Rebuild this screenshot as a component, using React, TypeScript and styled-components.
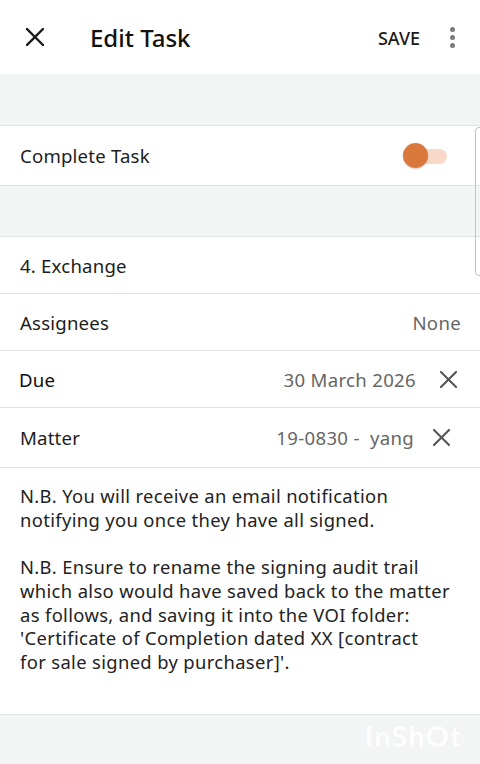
import React from 'react';
import styled, { createGlobalStyle } from 'styled-components';

const GlobalStyle = createGlobalStyle`
  html, body {
    margin: 0;
    padding: 0;
    background: #f3f4f4;
  }
  body {
    font-family: "Noto Sans", "Open Sans", sans-serif;
    color: #1c1c1c;
  }
  * {
    box-sizing: border-box;
  }
`;

const CloseIcon = ({ size = 18, color = '#1c1c1c', width = 2.4 }: { size?: number; color?: string; width?: number }) => (
  <svg width={size} height={size} viewBox="0 0 18 18">
    <path d="M1 1 L17 17 M17 1 L1 17" stroke={color} strokeWidth={width} strokeLinecap="square" fill="none" />
  </svg>
);

const notes = [
  ['N.B. You will receive an email notification', 'notifying you once they have all signed.'],
  [
    'N.B. Ensure to rename the signing audit trail',
    'which also would have saved back to the matter',
    'as follows, and saving it into the VOI folder:',
    "'Certificate of Completion dated XX [contract",
    "for sale signed by purchaser]'.",
  ],
];

const App = () => {
  return (
    <>
      <GlobalStyle />
      <Screen>
        <Header>
          <IconButton>
            <CloseIcon />
          </IconButton>
          <Title>Edit Task</Title>
          <SaveButton>SAVE</SaveButton>
          <Kebab>
            <Dot />
            <Dot />
            <Dot />
          </Kebab>
        </Header>

        <Spacer $height={52} />

        <Row $height={60}>
          <Label>Complete Task</Label>
          <Toggle>
            <Track />
            <Knob />
          </Toggle>
        </Row>

        <Spacer $height={51} />

        <Row $height={57}>
          <Label>4. Exchange</Label>
        </Row>
        <Row $height={57}>
          <Label>Assignees</Label>
          <Value $pad={19}>None</Value>
        </Row>
        <Row $height={57}>
          <Label $dark>Due</Label>
          <Value $pad={0}>30 March 2026</Value>
          <ClearButton $gap={24} $right={23}>
            <CloseIcon size={17} color="#555" width={2.2} />
          </ClearButton>
        </Row>
        <Row $height={60}>
          <Label>Matter</Label>
          <Value $pad={0}>19-0830 -&nbsp; yang</Value>
          <ClearButton $gap={19} $right={30}>
            <CloseIcon size={17} color="#555" width={2.2} />
          </ClearButton>
        </Row>

        <Notes>
          {notes.map((para, i) => (
            <Paragraph key={i}>
              {para.map((line, j) => (
                <Line key={j}>{line}</Line>
              ))}
            </Paragraph>
          ))}
        </Notes>

        <Bottom>
          <Watermark>InShOt</Watermark>
        </Bottom>

        <ScrollThumb />
      </Screen>
    </>
  );
};

const Screen = styled.div`
  position: relative;
  width: 480px;
  height: 764px;
  overflow: hidden;
  background: #f3f4f4;
  display: flex;
  flex-direction: column;
`;

const Header = styled.header`
  height: 74px;
  flex-shrink: 0;
  background: #ffffff;
  display: flex;
  align-items: center;
  padding: 0 25px 0 26px;
`;

const IconButton = styled.div`
  width: 18px;
  height: 18px;
  display: flex;
  margin-top: -1px;
`;

const Title = styled.h1`
  margin: 1px 0 0 46px;
  font-size: 24px;
  font-weight: 500;
  color: #111;
  flex: 1;
`;

const SaveButton = styled.span`
  font-size: 18px;
  font-weight: 500;
  color: #1a1a1a;
  margin-top: 1px;
`;

const Kebab = styled.div`
  display: flex;
  flex-direction: column;
  gap: 3px;
  margin-left: 30px;
  margin-top: 1px;
`;

const Dot = styled.span`
  width: 5px;
  height: 5px;
  border-radius: 50%;
  background: #7a7a7a;
`;

const Spacer = styled.div<{ $height: number }>`
  height: ${(p) => p.$height}px;
  flex-shrink: 0;
  border-bottom: 1px solid #e2e3e3;
`;

const Row = styled.div<{ $height: number }>`
  height: ${(p) => p.$height}px;
  flex-shrink: 0;
  display: flex;
  align-items: center;
  padding: 0 0 0 20px;
  background: #ffffff;
  border-bottom: 1px solid #e2e3e3;
`;

const Label = styled.span<{ $dark?: boolean }>`
  font-size: 18.6px;
  letter-spacing: 0.2px;
  color: ${(p) => (p.$dark ? '#0e0e0e' : '#1c1c1c')};
  flex: 1;
  margin-left: ${(p) => (p.$dark ? '-1px' : '0')};
`;

const Value = styled.span<{ $pad: number }>`
  font-size: 18.6px;
  letter-spacing: 0.3px;
  color: #666;
  padding-right: ${(p) => p.$pad}px;
`;

const ClearButton = styled.div<{ $gap: number; $right: number }>`
  display: flex;
  margin-left: ${(p) => p.$gap}px;
  margin-right: ${(p) => p.$right}px;
`;

const Toggle = styled.div`
  position: relative;
  width: 40px;
  height: 26px;
  margin-right: 33px;
`;

const Track = styled.div`
  position: absolute;
  left: 4px;
  top: 6px;
  width: 36px;
  height: 15px;
  border-radius: 8px;
  background: #f8d9c8;
`;

const Knob = styled.div`
  position: absolute;
  left: -4px;
  top: 0;
  width: 25px;
  height: 25px;
  border-radius: 50%;
  background: #d9783b;
  box-shadow: 0 1px 2px rgba(0, 0, 0, 0.2);
`;

const Notes = styled.div`
  height: 247px;
  flex-shrink: 0;
  background: #ffffff;
  border-bottom: 1px solid #e2e3e3;
  padding: 16px 20px 0 20px;
  font-size: 18.4px;
  letter-spacing: 0.35px;
  line-height: 23.7px;
  color: #222;
`;

const Paragraph = styled.p`
  margin: 0 0 23.7px;
`;

const Line = styled.span`
  display: block;
  white-space: nowrap;
`;

const Bottom = styled.div`
  flex: 1;
  display: flex;
  justify-content: flex-end;
  align-items: flex-start;
  padding: 4px 18px 0 0;
`;

const Watermark = styled.span`
  font-family: "Lato", "Noto Sans", sans-serif;
  font-size: 29px;
  font-weight: 900;
  line-height: 34px;
  color: rgba(255, 255, 255, 0.95);
  text-shadow: 0 0 1px rgba(0, 0, 0, 0.06);
  letter-spacing: 1px;
`;

const ScrollThumb = styled.div`
  position: absolute;
  left: 475px;
  top: 127px;
  width: 10px;
  height: 149px;
  border: 1px solid #c4c4c4;
  border-radius: 4px;
`;

export default App;
